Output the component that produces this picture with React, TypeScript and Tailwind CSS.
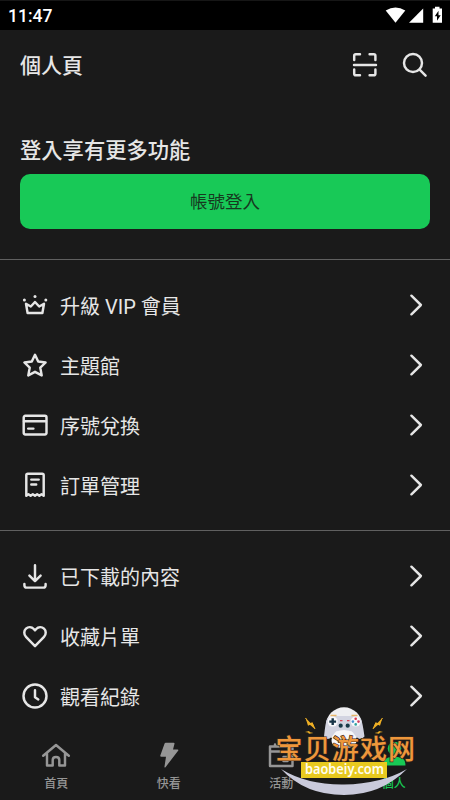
import React from "react";

const stroke = {
  fill: "none",
  stroke: "currentColor",
  strokeWidth: 2.45,
  strokeLinecap: "round" as const,
  strokeLinejoin: "round" as const,
};

function Icon({ children, size = 26 }: { children: React.ReactNode; size?: number }) {
  return (
    <svg width={size} height={size} viewBox={`0 0 ${size} ${size}`} className="block shrink-0" {...stroke}>
      {children}
    </svg>
  );
}

const Crown = () => (
  <Icon>
    <path d="M4 11.8 5.6 21h14.8L22 11.800l-4.800 2.700L13 10l-4.200 4.500z" />
    <g fill="currentColor" stroke="none">
      <circle cx="2.4" cy="8" r="1.5" />
      <circle cx="13" cy="4.6" r="1.5" />
      <circle cx="23.8" cy="8" r="1.5" />
    </g>
  </Icon>
);

const Star = () => (
  <Icon>
    <path d="M13 2.8 16.2 9.500l7.400 1-5.300 5.200 1.400 7.700L13 19.800l-6.700 3.600 1.400-7.700-5.300-5.200 7.400-1z" />
  </Icon>
);

const Card = () => (
  <Icon>
    <rect x="1.7" y="3.8" width="22.8" height="18.6" rx="1.600" />
    <path d="M2 9.200h22M6.200 16.600h5.200" />
  </Icon>
);

const Receipt = () => (
  <Icon>
    <path d="M4.300 23.800V3.300q0-1.500 1.500-1.500h14.400q1.500 0 1.500 1.500v20.500l-2.200-1.500-2.150 1.500-2.200-1.500-2.150 1.500-2.200-1.500-2.150 1.500-2.200-1.500z" />
    <path d="M9.300 7.600h7.400M9.300 12.400h4.900" />
  </Icon>
);

const Download = () => (
  <Icon>
    <path d="M13 2.200v15.800M7.400 12.600 13 18.200l5.600-5.600M2.400 21v1.200q0 2.400 2.400 2.400h16.400q2.400 0 2.400-2.400V21" />
  </Icon>
);

const Heart = () => (
  <Icon>
    <path d="M13 23.200 4 13.900C1.600 11.400 1.800 7.700 4 5.700s5.600-1.900 7.800.3L13 7.300 14.200 6c2.200-2.200 5.600-2.300 7.800-.3s2.400 5.700 0 8.200z" />
  </Icon>
);

const Clock = () => (
  <Icon>
    <circle cx="13" cy="13" r="11.500" />
    <path d="M13 7.300v6.900l3.300 2.200" />
  </Icon>
);

function Row({ icon, label }: { icon: React.ReactNode; label: string }) {
  return (
    <li className="flex h-15 items-center pr-[27px] pl-[22px]">
      {icon}
      <span className="ml-3 flex-1 pt-[3px] text-[20px] leading-7">{label}</span>
      <svg width="14" height="24" viewBox="0 0 14 24" className="block" {...stroke}>
        <path d="M2.400 2.700 11.900 12 2.400 21.300" />
      </svg>
    </li>
  );
}

function Tab({ icon, label, active }: { icon: React.ReactNode; label: string; active?: boolean }) {
  return (
    <div className={`flex flex-1 flex-col items-center ${active ? "text-[#18c955]" : "text-[#969696]"}`}>
      {icon}
      <span className="mt-[4px] text-[12px] leading-4 font-medium">{label}</span>
    </div>
  );
}

function Watermark() {
  return (
    <svg width="185" height="105" viewBox="0 0 185 105" className="absolute bottom-0 left-[265px]">
      <path d="M16 74Q42 90 79 89.500 116 89 142 74 116 100 79 100 40 100 16 74Z" fill="#c9cadb" />
      <ellipse cx="79" cy="30" rx="18" ry="17.700" fill="#efeff2" />
      <path d="M62 24q5-4 11-3h12q6-1 11 3 1.500 3 3.500 17.500-4 4.500-8 .5L86.500 36h-15L66.500 42q-4 4-7.500-.500Q60.500 27 62 24z" fill="#d3d4e1" />
      <path d="M66.500 45Q68 35 79 35t12.500 10q0 8-12.500 8t-12.500-8z" fill="#f7f7f9" />
      <path d="M65.500 20.500h6M86.500 20.500h6" stroke="#e6b568" strokeWidth="1.600" />
      <circle cx="67.700" cy="26.600" r="5" fill="#f8f8fb" />
      <circle cx="90.700" cy="26.600" r="5" fill="#f8f8fb" />
      <path d="M67.700 23.200v6.800M64.300 26.600h6.800" stroke="#183447" strokeWidth="2.400" />
      <circle cx="90.700" cy="23.800" r="1.300" fill="#da354b" />
      <circle cx="90.700" cy="29.400" r="1.300" fill="#30a4a0" />
      <circle cx="87.900" cy="26.600" r="1.300" fill="#4a8fd0" />
      <circle cx="93.500" cy="26.600" r="1.300" fill="#d43b60" />
      <path d="M75 25.700h2.500M82 25.700h2.500" stroke="#d74556" strokeWidth="1.200" />
      <circle cx="75.700" cy="30.700" r="2.100" fill="#193948" />
      <circle cx="82.700" cy="30.700" r="2.100" fill="#193948" />
      <g fill="#edae24">
        <path d="M40.500 22.800 45.500 28l1.800-.800L50 34.200 45 29.800l-2 .900z" />
        <path d="M117.500 22.800 112.500 28l-1.800-.800L108 34.200l5-4.400 2 .900z" />
        <path d="m40 37 4-1 1 1.300 3.500.7-4.500.8-1-1.200zM118 37l-4-1-1 1.300-3.500.7 4.500.8 1-1.200z" />
      </g>
      <g stroke="#edae24" strokeWidth="1" fill="none">
        <path d="M40.500 23 45 30l2.300-2L50 34M117.500 23 113 30l-2.300-2L108 34" />
      </g>
      <text
        x="10.500"
        y="63.500"
        textLength="139.500"
        fontSize="27"
        fontWeight="500"
        fill="#ee973b"
        stroke="#3a2a1c"
        strokeWidth="1.200"
        paintOrder="stroke"
        className="font-['Noto_Sans_CJK_SC',sans-serif]"
      >
        宝贝游戏网
      </text>
      <rect x="36" y="67" width="86" height="16" fill="#e8c91f" />
      <text x="40" y="79" textLength="79" lengthAdjust="spacingAndGlyphs" fontSize="14" fontWeight="600" fill="#fffdf0" className="font-['Noto_Sans',sans-serif]">
        baobeiy.com
      </text>
    </svg>
  );
}

export default function App() {
  return (
    <main className="relative flex h-[800px] w-[450px] flex-col overflow-hidden bg-[#1a1a1a] font-[Roboto,'Noto_Sans_CJK_TC',sans-serif] text-[#e6e6e6]">
      <div className="flex h-[30px] shrink-0 items-center justify-between border-t border-[#161616] bg-black pr-[7px] pl-2 text-white">
        <time className="text-[17.500px] leading-5 font-medium">11:47</time>
        <svg width="58" height="18" viewBox="0 0 58 18" fill="currentColor" className="mb-[2px] block">
          <path d="M.7 4.600Q10.500-1.800 20.300 4.600L10.500 16.800z" />
          <path d="M38.200 2.500v14.300H24z" />
          <path fillRule="evenodd" d="M50 .700h4.500v1.800H57v14.300h-9.300V2.500H50zm3.500 4-3.700 5.500h2.200v4.500l3.700-5.500h-2.200z" />
        </svg>
      </div>

      <header className="flex h-[70px] shrink-0 items-center justify-between pr-[22px] pl-5">
        <h1 className="pt-[2px] text-[21px] leading-8 font-medium">個人頁</h1>
        <div className="flex items-center gap-6">
          <Icon>
            <path d="M2.200 8V3.800Q2.200 2.200 3.800 2.200H8M17.600 2.200h4.200q1.600 0 1.600 1.600V8M2.200 17.500v4.200q0 1.600 1.600 1.600H8M17.600 23.300h4.200q1.600 0 1.600-1.600v-4.200M2 12.900h22" />
          </Icon>
          <Icon>
            <circle cx="11" cy="11" r="9" />
            <path d="m17.600 17.600 6 6" />
          </Icon>
        </div>
      </header>

      <section className="h-[159px] shrink-0 px-5 pt-[35px]">
        <h2 className="text-[21.300px] leading-8 font-medium">登入享有更多功能</h2>
        <button className="mt-[7px] flex h-[55px] w-full items-center justify-center rounded-[10px] bg-[#18c957] pt-[2px] text-[17.500px] text-[#17381f]">
          帳號登入
        </button>
      </section>

      <ul className="h-[271px] shrink-0 border-t border-[#606060] pt-[15px]">
        <Row icon={<Crown />} label="升級 VIP 會員" />
        <Row icon={<Star />} label="主題館" />
        <Row icon={<Card />} label="序號兌換" />
        <Row icon={<Receipt />} label="訂單管理" />
      </ul>
      <ul className="h-[196px] shrink-0 border-t border-[#606060] pt-[15px]">
        <Row icon={<Download />} label="已下載的內容" />
        <Row icon={<Heart />} label="收藏片單" />
        <Row icon={<Clock />} label="觀看紀錄" />
      </ul>

      <nav className="flex flex-1 pt-4">
        <Tab
          label="首頁"
          icon={
            <svg width="30" height="30" viewBox="0 0 30 30" className="block" {...stroke}>
              <path d="M2.200 13.800 15 3l12.800 10.800M6 11.500v12h5.700V18q0-3 3.300-3t3.300 3v5.500H24v-12" />
            </svg>
          }
        />
        <Tab
          label="快看"
          icon={
            <svg width="30" height="30" viewBox="0 0 30 30" fill="currentColor" className="block">
              <path d="M10.500 1.700q.3-1 1.300-1h7.800q1.200 0 .9 1.100L19 7.400h4.500q1.500 0 .6 1.300L11.500 25.200q-1.300 1-1-.6l1.500-9.900H7.300q-1.300 0-1-1.200z" />
            </svg>
          }
        />
        <Tab
          label="活動"
          icon={
            <svg width="30" height="30" viewBox="0 0 30 30" className="block" {...stroke}>
              <path d="M4 4.500h22.500v19.500H4zM4 9.500h22.500M9 2.500v2M21.500 2.500v2" />
              <path d="M17.500 15h4v4h-4z" fill="currentColor" />
            </svg>
          }
        />
        <Tab
          active
          label="個人"
          icon={
            <svg width="30" height="30" viewBox="0 0 30 30" fill="currentColor" className="block">
              <circle cx="15.500" cy="6.500" r="6.800" />
              <path d="M4.500 23.500Q4.500 15 12.500 15h6q8 0 8 8.500z" />
            </svg>
          }
        />
      </nav>
      <Watermark />
    </main>
  );
}
